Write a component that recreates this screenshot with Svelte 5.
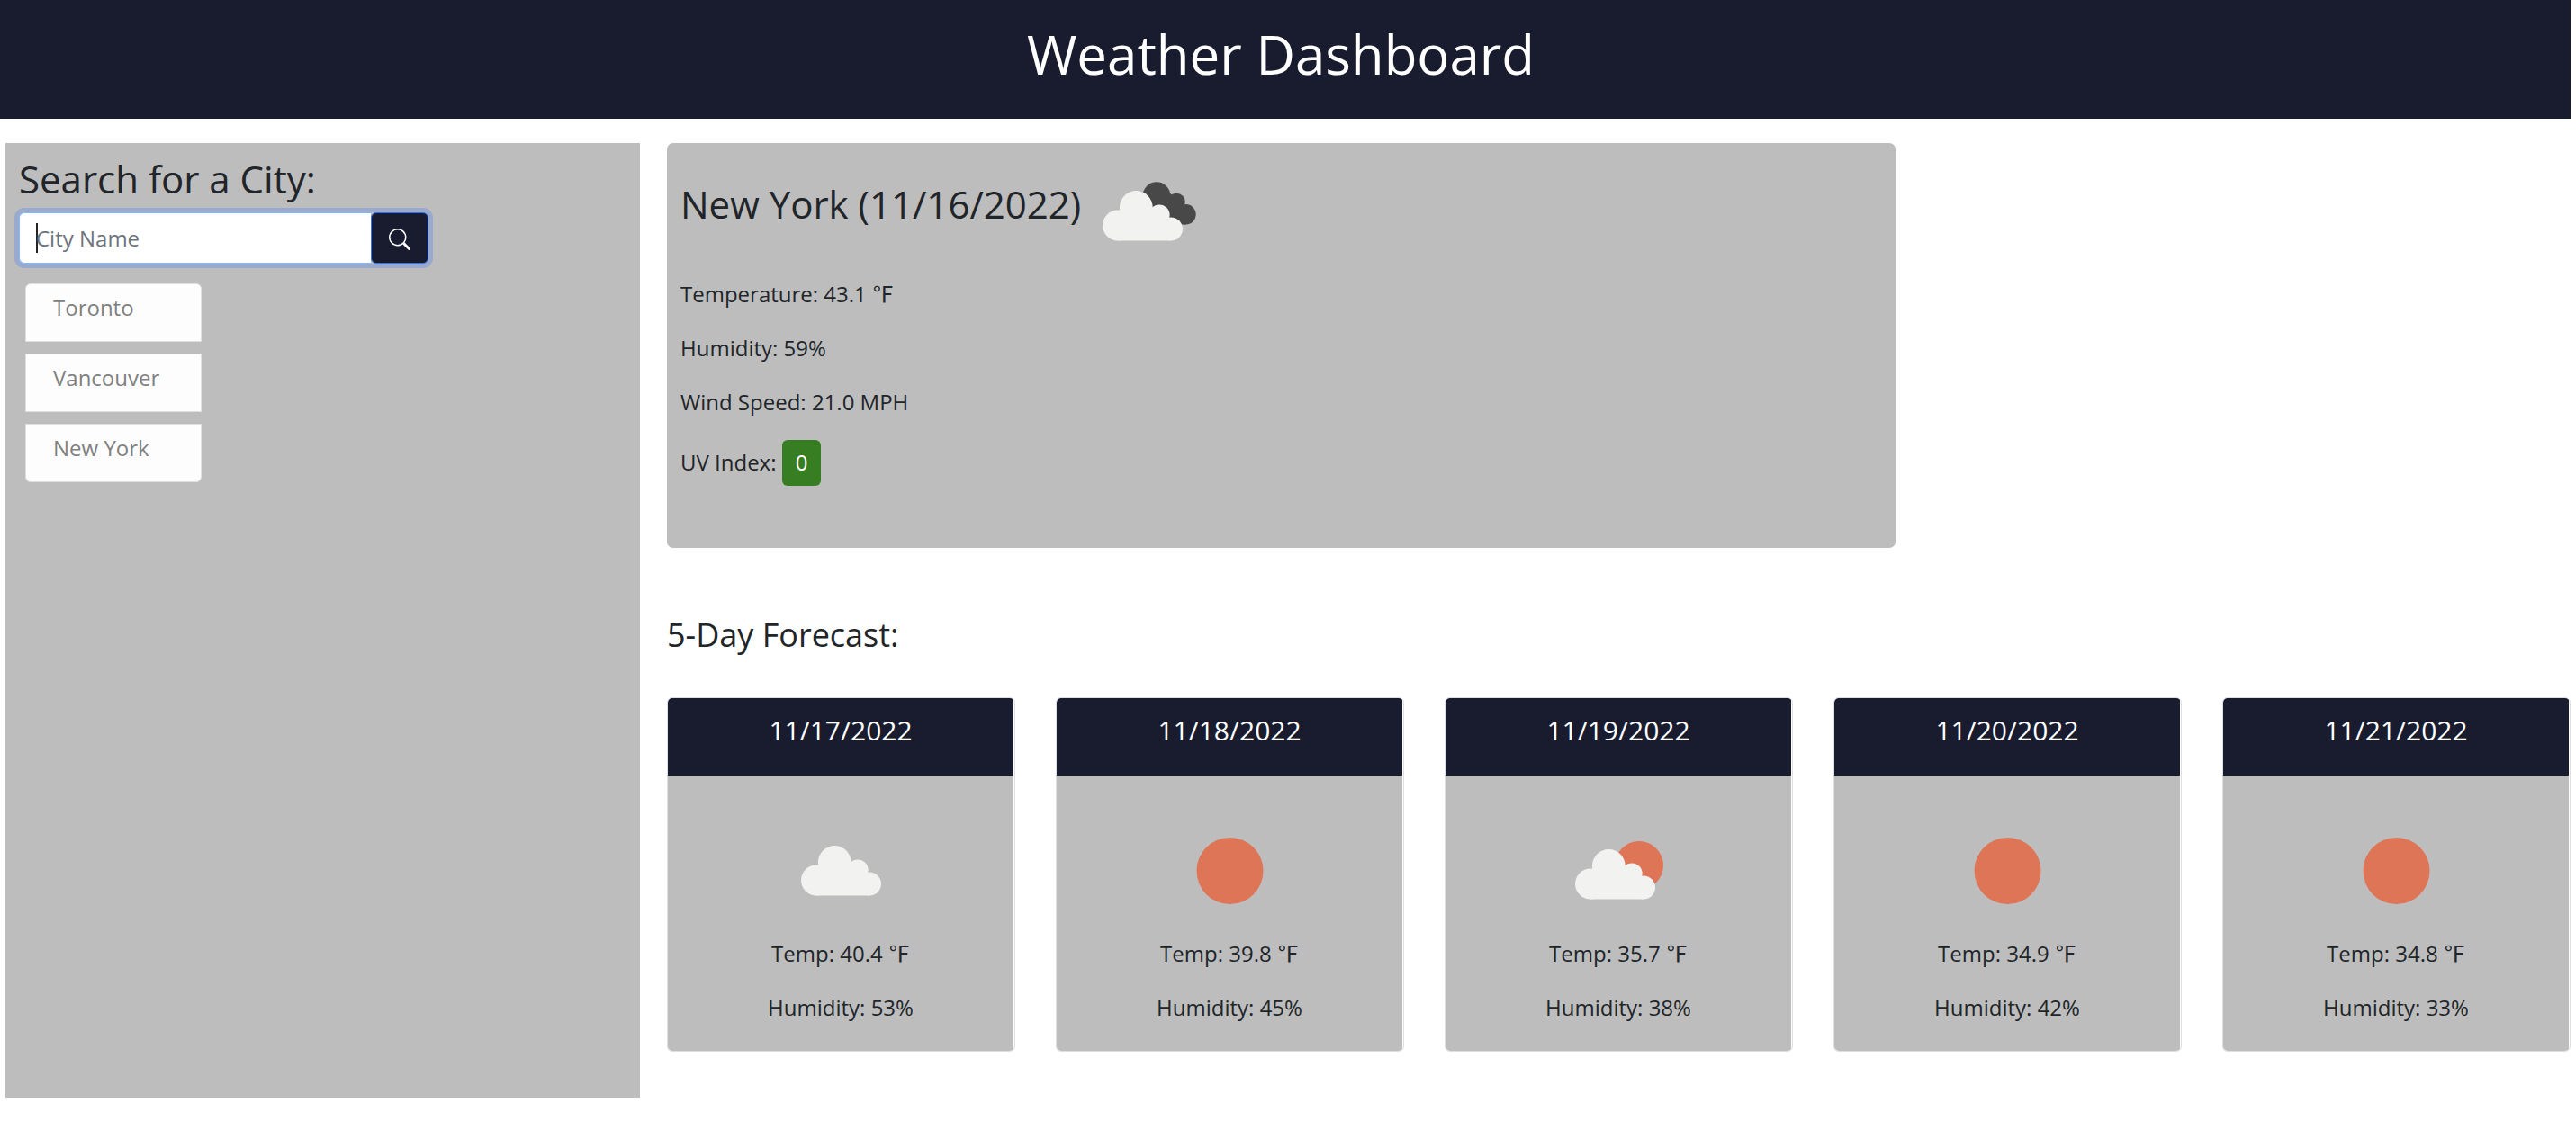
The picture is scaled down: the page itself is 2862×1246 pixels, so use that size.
<script>
  const cities = ['Toronto', 'Vancouver', 'New York'];
  const forecast = [
    { date: '11/17/2022', icon: 'cloud', temp: '40.4', humidity: 53 },
    { date: '11/18/2022', icon: 'sun', temp: '39.8', humidity: 45 },
    { date: '11/19/2022', icon: 'partly', temp: '35.7', humidity: 38 },
    { date: '11/20/2022', icon: 'sun', temp: '34.9', humidity: 42 },
    { date: '11/21/2022', icon: 'sun', temp: '34.8', humidity: 33 }
  ];
  let query = $state('');
</script>

{#snippet cloud()}
  <g class="cloud">
    <circle cx="17" cy="38.5" r="17" />
    <circle cx="37.3" cy="18.5" r="18.4" />
    <circle cx="63" cy="27" r="11.6" />
    <circle cx="76" cy="42.5" r="13" />
    <path d="M17 55.5V30L37 20H63L76 42V55.5Z" />
  </g>
{/snippet}

{#snippet weather(kind)}
  <svg class="weather" viewBox="0 0 150 150" role="img" aria-label={kind}>
    {#if kind === 'sun'}
      <circle class="sun" cx="75.5" cy="75" r="37" />
    {:else if kind === 'cloud'}
      <g transform="translate(31 47)">{@render cloud()}</g>
    {:else}
      <circle class="sun" cx="98" cy="69" r="27" />
      <g transform="translate(27 51)">{@render cloud()}</g>
    {/if}
  </svg>
{/snippet}

<header><h1>Weather Dashboard</h1></header>

<main>
  <aside>
    <label class="heading" for="city">Search for a City:</label>
    <form onsubmit={(e) => e.preventDefault()}>
      <input id="city" type="text" placeholder="City Name" bind:value={query} />
      <button class="go" type="submit" aria-label="Search">
        <svg viewBox="0 0 16 16"><path d="M11.742 10.344a6.5 6.5 0 1 0-1.397 1.398h-.001c.03.04.062.078.098.115l3.85 3.85a1 1 0 0 0 1.415-1.414l-3.85-3.85a1.007 1.007 0 0 0-.115-.1zM12 6.5a5.5 5.5 0 1 1-11 0 5.5 5.5 0 0 1 11 0z" /></svg>
      </button>
    </form>
    <div class="history">
      {#each cities as city}
        <button type="button">{city}</button>
      {/each}
    </div>
  </aside>

  <div class="content">
    <section class="current">
      <div class="title">
        <h2>New York (11/16/2022)</h2>
        <svg class="now" viewBox="0 0 104 66" role="img" aria-label="broken clouds">
          <g class="dark">
            <circle cx="60" cy="15.5" r="15.3" />
            <circle cx="82" cy="22.5" r="9.8" />
            <circle cx="92.5" cy="36.3" r="11.2" />
            <path d="M50 12H74L90 26L93 47.5H70Z" />
          </g>
          <g transform="translate(0 10)">{@render cloud()}</g>
        </svg>
      </div>
      <p>Temperature: 43.1 ℉</p>
      <p>Humidity: 59%</p>
      <p>Wind Speed: 21.0 MPH</p>
      <p>UV Index: <span class="uv">0</span></p>
    </section>

    <h3>5-Day Forecast:</h3>

    <section class="days">
      {#each forecast as day}
        <article>
          <h4>{day.date}</h4>
          <div class="body">
            {@render weather(day.icon)}
            <p>Temp: {day.temp} ℉</p>
            <p>Humidity: {day.humidity}%</p>
          </div>
        </article>
      {/each}
    </section>
  </div>
</main>

<style>
  :global(body) {
    margin: 0;
    background: #fff;
    color: #212529;
    font: 24px/36px 'Open Sans', 'Noto Sans CJK JP', sans-serif;
  }
  h1, h2, h3, h4, p { margin: 0; font-weight: 400; }
  header {
    margin-right: 6px;
    height: 132px;
    box-sizing: border-box;
    padding: 24px 10px 0 0;
    background: #181c2e;
    color: #fff;
    text-align: center;
  }
  h1 { font-size: 60px; line-height: 72px; font-weight: 500; }
  main {
    display: grid;
    grid-template-columns: 705fr 2115fr;
    gap: 30px;
    padding: 27px 6px 26px;
  }
  aside {
    box-sizing: border-box;
    min-height: 1061px;
    padding: 15px;
    background: #bdbdbd;
  }
  .heading { display: block; font-size: 42px; line-height: 50px; }
  form {
    display: flex;
    width: 455px;
    margin-top: 12px;
    border-radius: 6px;
    box-shadow: 0 0 0 5px #9aaacd;
  }
  input {
    flex: 1;
    min-width: 0;
    height: 57px;
    box-sizing: border-box;
    padding: 0 18px;
    border: 1px solid #86b7fe;
    border-right: 0;
    border-radius: 6px 0 0 6px;
    outline: 0;
    font: inherit;
    color: inherit;
    background: #fff;
  }
  input::placeholder { color: #6c757d; opacity: 1; }
  input:placeholder-shown {
    background: linear-gradient(#212529, #212529) 18px center / 2px 33px no-repeat #fff;
  }
  button { font: inherit; cursor: pointer; }
  .go {
    width: 64px;
    padding: 0;
    border: 1px solid #2f74f5;
    border-radius: 6px;
    background: #181c2e;
  }
  .go svg { width: 24px; height: 24px; fill: #fff; display: block; margin: 2px auto 0; }
  .history {
    display: flex;
    flex-direction: column;
    gap: 13px;
    width: 196px;
    margin: 22px 0 0 7px;
  }
  .history button {
    height: 65px;
    padding: 8px 30px 20px;
    border: 1px solid #dfdfdf;
    background: #fdfdfd;
    color: #808080;
    text-align: left;
  }
  .history button:first-child { border-radius: 6px 6px 0 0; }
  .history button:last-child { border-radius: 0 0 6px 6px; }
  .current {
    box-sizing: border-box;
    width: 64.55%;
    min-height: 450px;
    padding: 43px 15px 40px;
    border-radius: 7px;
    background: #bdbdbd;
  }
  .title { display: flex; align-items: flex-start; gap: 24px; height: 69px; margin-bottom: 38px; }
  h2 { font-size: 42px; line-height: 50px; }
  .now { width: 104px; height: 66px; }
  .current p { margin-bottom: 24px; }
  .uv {
    display: inline-block;
    padding: 7px 15px 8px;
    border-radius: 6px;
    background: #377d22;
    color: #fff;
    font-weight: 500;
  }
  h3 { font-size: 36px; line-height: 44px; margin: 75px 0 47px; }
  .days { display: grid; grid-template-columns: repeat(5, 1fr); gap: 45px; }
  article {
    border: 1px solid #dfdfdf;
    border-radius: 6px;
    overflow: hidden;
    padding-right: 1px;
    text-align: center;
  }
  h4 {
    height: 86px;
    box-sizing: border-box;
    padding-top: 18px;
    background: #181c2e;
    color: #fff;
    font-size: 30px;
    line-height: 36px;
  }
  .body { background: #bdbdbd; padding: 31px 0 30px; }
  .body p + p { margin-top: 24px; }
  .weather { display: block; width: 150px; height: 150px; margin: 0 auto -1px; }
  .cloud { fill: #f2f2f0; }
  .sun { fill: #dd7556; }
  .dark { fill: #484849; }
</style>
